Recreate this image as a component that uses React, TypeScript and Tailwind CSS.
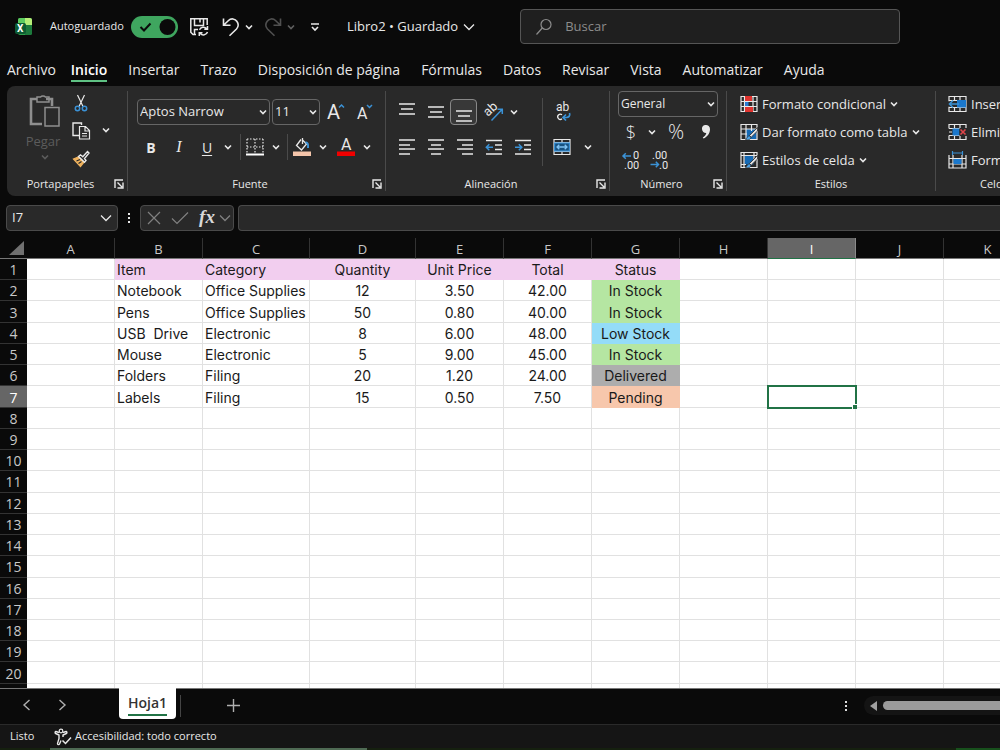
import { ReactNode, useState } from "react";
import { clsx } from "clsx";

type IconProps = { w?: number; h?: number; className?: string; children: ReactNode };

const Icon = ({ w = 18, h = 18, className, children }: IconProps) => (
  <svg
    width={w}
    height={h}
    viewBox={`0 0 ${w} ${h}`}
    fill="none"
    stroke="currentColor"
    strokeWidth={1.2}
    className={clsx("shrink-0 overflow-visible", className)}
    aria-hidden="true"
  >
    {children}
  </svg>
);

type GlyphProps = { x: number; y: number; size: number; bold?: boolean; children: string };

const Glyph = ({ x, y, size, bold, children }: GlyphProps) => (
  <text x={x} y={y} fontSize={size} fontWeight={bold ? 700 : 400} fill="currentColor" stroke="none" className="font-[Roboto,sans-serif]">
    {children}
  </text>
);

const SmallChevron = ({ className }: { className?: string }) => (
  <Icon w={8} h={6} className={className}>
    <path d="M1 1.5 4 4.5 7 1.5" strokeWidth={1.6} />
  </Icon>
);

const WideChevron = ({ className }: { className?: string }) => (
  <Icon w={12} h={8} className={className}>
    <path d="M1 1.5 6 6.5 11 1.5" strokeWidth={1.3} />
  </Icon>
);

const ExcelLogo = () => (
  <Icon w={18} h={18}>
    <g stroke="none">
      <rect x="3" y="0" width="14" height="17" rx="2" fill="#2f9e4b" />
      <path d="M5 0h5v7H3V2a2 2 0 0 1 2-2Z" fill="#5ccb5f" />
      <path d="M10 0h5a2 2 0 0 1 2 2v5h-7Z" fill="#b6ef78" />
      <path d="M10 7h7v8a2 2 0 0 1-2 2h-5Z" fill="#1c7a3c" />
      <rect x="0" y="5" width="11" height="11" rx="2" fill="#0d5c33" />
    </g>
    <g className="text-white">
      <Glyph x={2} y={14} size={10} bold>X</Glyph>
    </g>
  </Icon>
);

const SaveIcon = () => (
  <Icon w={20} h={20}>
    <g strokeWidth={1.5}>
      <path d="M7 17.5H4L1.8 15.3V1.8h16.4V8" />
      <path d="M5.5 2v6.5h9V2M11 2v3.5M5.5 17.5v-5H9" />
      <path d="M10.5 12.8a4.2 4.2 0 0 1 7-1.2M18.5 9v3.2h-3.2M18.5 15a4.2 4.2 0 0 1-7.2 1.4M10.3 19v-3.2h3.2" />
    </g>
  </Icon>
);

const UndoIcon = () => (
  <Icon w={18} h={20}>
    <path d="M1.5 1.5v6.8h7M1.8 8 6.5 3.5a5.5 5.5 0 0 1 8.5 1c1.7 2.5 1.5 5.3-.5 7.5L7.5 18.8" strokeWidth={1.6} />
  </Icon>
);

const RedoIcon = () => (
  <Icon w={18} h={20}>
    <path d="M16.5 1.5v6.8h-7M16.2 8 11.5 3.5a5.5 5.5 0 0 0-8.5 1c-1.7 2.5-1.5 5.3.5 7.5l7 6.8" strokeWidth={1.6} />
  </Icon>
);

const PasteIcon = () => (
  <Icon w={32} h={34}>
    <path d="M13 30H2V5h6M17 5h6v7" strokeWidth={2.6} />
    <path d="M8 8V3h3.5a3 2.5 0 0 1 5 0H20v5Z" strokeWidth={1.5} />
    <path d="M16 13.5h14v18.5H16Z" strokeWidth={1.5} />
  </Icon>
);

const CutIcon = () => (
  <Icon w={14} h={18}>
    <path d="M3.5 1 9 12.5M10.5 1 5 12.5" />
    <g stroke="#3b92d6" strokeWidth={1.5}>
      <circle cx="3.5" cy="14.5" r="2.2" />
      <circle cx="10.5" cy="14.5" r="2.2" />
    </g>
  </Icon>
);

const CopyIcon = () => (
  <Icon w={19} h={18}>
    <path d="M7.5 13.5H1V1h8.5v2" strokeWidth={1.4} />
    <path d="M7.5 4.5h6l4 4V17h-10ZM13 4.5V9h4.5M10 11.5h5M10 14h5" />
  </Icon>
);

const BrushIcon = () => (
  <Icon w={18} h={18}>
    <path d="M1.5 9 8.5 16.5 12 12 6.5 7Z" fill="#f0b35e" stroke="#f0b35e" />
    <path d="M4.5 11 8 9.5M6.5 13.5 9.5 11.5" stroke="#292929" />
    <path d="M6.5 6.5 8.5 4.8 10.8 6.8 15.5 1.5 17 3 12.5 8.5 14 10.5 12.5 12.2Z" strokeWidth={1.4} />
  </Icon>
);

const BordersIcon = () => (
  <Icon>
    <path d="M1 1h16M1 9h16M1 1v14M9 1v14M17 1v14" strokeDasharray="1.5 1.5" />
    <path d="M0 16.5h18" strokeWidth={2} stroke="#fff" />
  </Icon>
);

const FillIcon = () => (
  <Icon w={18} h={20}>
    <path d="M8 2.5 3.5 8.5 8.5 13 13.5 7 9.5 3V1M9.5 1v6" strokeWidth={1.3} />
    <path d="M12.5 5.5c2-.5 3 1.5 2.5 5.5" stroke="#3b92d6" strokeWidth={2} />
    <rect x="0" y="14.5" width="18" height="4.5" fill="#f4c5aa" stroke="none" />
  </Icon>
);

const FontColorIcon = () => (
  <Icon w={18} h={20}>
    <Glyph x={4} y={13} size={16}>A</Glyph>
    <rect x="0" y="14.5" width="18" height="4.5" fill="#f00000" stroke="none" />
  </Icon>
);

const GrowFontIcon = () => (
  <Icon w={20} h={20}>
    <Glyph x={0} y={17} size={20}>A</Glyph>
    <path d="M12 5.5 14.5 3 17 5.5" stroke="#3b92d6" strokeWidth={1.5} />
  </Icon>
);

const ShrinkFontIcon = () => (
  <Icon w={20} h={20}>
    <Glyph x={2} y={17} size={16}>A</Glyph>
    <path d="M12 3 14.5 5.5 17 3" stroke="#3b92d6" strokeWidth={1.5} />
  </Icon>
);

/* Horizontal strokes, given as [x1, x2, y] */
const LinesIcon = ({ lines }: { lines: number[][] }) => (
  <Icon w={16} h={18}>
    {lines.map(([x1, x2, y]) => (
      <path key={y} d={`M${x1} ${y}H${x2}`} strokeWidth={1.4} />
    ))}
  </Icon>
);

const IndentIcon = ({ right }: { right?: boolean }) => (
  <Icon w={18} h={18}>
    <path d="M1 2.5h16M10 7h7M10 11.5h7M1 16h16" strokeWidth={1.4} />
    <path
      d={right ? "M1 9.2h6.5M4.8 6.2 7.8 9.2 4.8 12.2" : "M1.5 9.2H8M4.3 6.2 1.3 9.2 4.3 12.2"}
      stroke="#3b92d6"
      strokeWidth={1.5}
    />
  </Icon>
);

const OrientationIcon = () => (
  <Icon w={20} h={20}>
    <g transform="rotate(-42 7 8)">
      <Glyph x={0} y={11} size={13}>ab</Glyph>
    </g>
    <path d="M7.5 18.5 18 7.5M13.5 7.2H18.3V12" stroke="#3b92d6" strokeWidth={1.5} />
  </Icon>
);

const WrapIcon = () => (
  <Icon w={18} h={20}>
    <Glyph x={2} y={9} size={12}>ab</Glyph>
    <path d="M8 12.8a2.6 2.6 0 1 0 0 4" strokeWidth={1.3} />
    <path d="M15.5 11c1 3-1 4.5-3 4.5H9.500M12 12.5 9 15.5l3 3" stroke="#3b92d6" strokeWidth={1.7} />
  </Icon>
);

const MergeIcon = () => (
  <Icon>
    <path d="M1 1.5h16v15H1ZM1 4.5h16M1 13.5h16M9 1.5v3M9 13.5v3" />
    <rect x="1.6" y="5" width="14.8" height="8" fill="#17517f" stroke="#3b92d6" />
    <path d="M4 9h10M6.3 6.8 4 9l2.3 2.2M11.7 6.8 14 9l-2.3 2.2" stroke="#7fc1f2" strokeWidth={1.3} />
  </Icon>
);

const DecimalIcon = ({ fewer }: { fewer?: boolean }) => (
  <Icon w={18} h={20}>
    {fewer ? (
      <>
        <Glyph x={2} y={9} size={11}>.00</Glyph>
        <Glyph x={9} y={19} size={11}>.0</Glyph>
        <path d="M.5 14.5h8M5.8 11.8l2.7 2.7-2.7 2.7" stroke="#3b92d6" strokeWidth={1.5} />
      </>
    ) : (
      <>
        <Glyph x={11} y={9} size={11}>0</Glyph>
        <Glyph x={2} y={19} size={11}>.00</Glyph>
        <path d="M1 6h8M3.8 3.3 1 6l2.8 2.7" stroke="#3b92d6" strokeWidth={1.5} />
      </>
    )}
  </Icon>
);

const CommaIcon = () => (
  <Icon w={12} h={16}>
    <path d="M5.5 1a4 4 0 0 1 4.5 4.2c0 4.3-3 7.8-6.5 9.3l-.7-1c2-1.2 3.2-2.8 3.5-4.5A4 4 0 0 1 2 5a3.8 3.8 0 0 1 3.5-4Z" fill="currentColor" stroke="none" />
  </Icon>
);

const ConditionalIcon = () => (
  <Icon>
    <path d="M1 1.5h16v15H1ZM1 6.5h16M1 11.5h16M4.5 1.5v15M13 1.5v15" />
    <rect x="5" y="1" width="7" height="5" fill="#e0342f" stroke="none" />
    <rect x="5" y="7" width="3.5" height="4" fill="#2b7cd3" stroke="none" />
    <rect x="5" y="12" width="8" height="5" fill="#e0342f" stroke="none" />
  </Icon>
);

const TableBrushIcon = ({ styles }: { styles?: boolean }) => (
  <Icon>
    {styles ? (
      <rect x="4.5" y="4.5" width="9" height="9" fill="#1569b4" stroke="none" />
    ) : (
      <rect x="6" y="6" width="10.5" height="10.5" fill="#1569b4" stroke="none" />
    )}
    <path d={styles ? "M1 1.5h16v15H1ZM4 1.5v15M14 1.5V8M1 4.5h16M1 13.5h5" : "M1 1.5h16v15H1ZM6 1.5v15M11.5 1.5V8M1 6h16M1 11h6"} />
    <path d="M17.5 4.5 9.5 12.5 11.2 14.2 17.5 8Z" fill="#e0e0e0" stroke="#292929" strokeWidth={0.8} />
    <path d="M9.2 12.8c-2 0-1.5 2.7-4 3.4 2.5 1.3 5.5.6 5.8-1.8Z" fill="#4ba3e8" stroke="#292929" strokeWidth={0.6} />
  </Icon>
);

const InsertCellsIcon = () => (
  <Icon w={19} h={18}>
    <path d="M1 1.5h17v15H1ZM1 5.5h17M1 12.5h17M6.5 1.5v4M12 1.5v4M6.5 12.5v4M12 12.5v4" />
    <rect x="9" y="5" width="9" height="7.5" fill="#1b78cc" stroke="none" />
    <path d="M0 6.2h8v5.6H0Z" fill="#292929" stroke="none" />
    <path d="M1.5 9H11M5 5.5 1.5 9 5 12.5" stroke="#3b92d6" strokeWidth={1.6} />
  </Icon>
);

const DeleteCellsIcon = () => (
  <Icon w={19} h={18}>
    <path d="M1 5.5v-4h17v4H1M1 12.5v4h17v-4H1M6.5 1.5v4M12 1.5v4M6.5 12.5v4M12 12.5v4M1 9h3" />
    <rect x="4.5" y="5.5" width="7" height="7" fill="#1b78cc" stroke="none" />
    <path d="M11.5 5h8v8h-8Z" fill="#292929" stroke="none" />
    <path d="M12.5 6.5 17.5 11.5M17.5 6.5 12.5 11.5" stroke="#e0454a" strokeWidth={1.6} />
  </Icon>
);

const FormatCellsIcon = () => (
  <Icon w={19} h={18}>
    <path d="M1 4v13h17V4M1 7.5h17M1 13h17M5 4v13M14 4v13" />
    <rect x="5.5" y="8" width="8" height="5" fill="#1b78cc" stroke="none" />
    <path d="M4.5 2h10M4.5 0v4M14.5 0v4" stroke="#3b92d6" />
  </Icon>
);

const LauncherIcon = () => (
  <Icon w={10} h={10}>
    <path d="M1 9V1h8M3.5 9H9V3.5M3.5 3.5 8 8" strokeWidth={1.4} />
  </Icon>
);

const AccessibilityIcon = () => (
  <Icon w={18} h={18}>
    <circle cx="7" cy="3" r="1.8" />
    <path d="M5 4.5 2 3.5c-1 0-1.3 1.5-.3 2L5 7v3.5L3.5 15.5c0 1.3 1.5 1.5 2 .5L7 12.5M9 4.5 12 3.5c1 0 1.3 1.5.3 2L9 7v2" strokeWidth={1.4} />
    <path d="M8.5 12.5 11.5 15.5 17 9.5" strokeWidth={1.5} />
  </Icon>
);

const Dots = () => (
  <Icon w={4} h={12}>
    <path d="M1 1h2v2H1ZM1 5h2v2H1ZM1 9h2v2H1Z" fill="currentColor" stroke="none" />
  </Icon>
);

type ButtonProps = { label: string; className?: string; children: ReactNode };

const ToolButton = ({ label, className, children }: ButtonProps) => (
  <button type="button" aria-label={label} className={clsx("flex h-[26px] shrink-0 items-center justify-center", className)}>
    {children}
  </button>
);

type DropProps = { label: string; options: string[]; className: string };

const Drop = ({ label, options, className }: DropProps) => (
  <div className={clsx("grid h-[26px] shrink-0 items-center rounded border border-[#666]", className)}>
    <select aria-label={label} className="col-start-1 row-start-1 h-full w-full appearance-none bg-transparent pl-[2px] outline-none">
      {options.map((option) => (
        <option key={option}>{option}</option>
      ))}
    </select>
    <SmallChevron className="pointer-events-none col-start-1 row-start-1 mr-[2px] justify-self-end" />
  </div>
);

type GroupProps = { title: string; launcher?: boolean; className?: string; children: ReactNode };

const Group = ({ title, launcher, className, children }: GroupProps) => (
  <section aria-label={title} className="flex shrink-0">
    <div className={clsx("flex flex-col", className)}>
      <div className="flex h-[88px]">{children}</div>
      <div className="flex h-5 items-center">
        <span className="flex-1 text-center text-[11px]">{title}</span>
        {launcher && (
          <button type="button" aria-label={`${title}: más opciones`} className="mr-[3px]">
            <LauncherIcon />
          </button>
        )}
      </div>
    </div>
    <div className="my-[5px] w-px bg-[#4a4a4a]" />
  </section>
);

const Separator = () => <div className="mx-[5px] h-[26px] w-px bg-[#4a4a4a]" />;

const TitleBar = () => {
  const [autosave, setAutosave] = useState(true);

  return (
    <header className="flex h-[53px] shrink-0 items-center pl-[15px]">
      <ExcelLogo />
      <label htmlFor="autosave" className="ml-[17px] w-[81px] text-[11px]">
        Autoguardado
      </label>
      <span className="grid h-[22px] w-[47px] shrink-0 items-center rounded-full bg-[#3fa65f]">
        <input
          id="autosave"
          type="checkbox"
          role="switch"
          checked={autosave}
          onChange={() => setAutosave(!autosave)}
          className="col-start-1 row-start-1 h-full w-full appearance-none rounded-full"
        />
        <svg width="47" height="22" viewBox="0 0 47 22" fill="none" className="pointer-events-none col-start-1 row-start-1" aria-hidden="true">
          <path d="M9.5 11 13 14.5 19.5 7.5" stroke="#0a0a0a" strokeWidth="2" />
          <circle cx="36.5" cy="11" r="8" fill="#0a0a0a" />
        </svg>
      </span>
      <ToolButton label="Guardar" className="ml-[11px]"><SaveIcon /></ToolButton>
      <ToolButton label="Deshacer" className="ml-[13px]"><UndoIcon /></ToolButton>
      <ToolButton label="Opciones de deshacer" className="ml-[5px]"><SmallChevron /></ToolButton>
      <ToolButton label="Rehacer" className="ml-[11px] text-[#505050]"><RedoIcon /></ToolButton>
      <ToolButton label="Opciones de rehacer" className="ml-[5px] text-[#606060]"><SmallChevron /></ToolButton>
      <ToolButton label="Personalizar barra" className="ml-[15px]">
        <Icon w={10} h={10}>
          <path d="M1 2h8M2 5 5 8 8 5" strokeWidth={1.6} />
        </Icon>
      </ToolButton>
      <button type="button" className="ml-[27px] flex items-center gap-[5px] text-[13px] whitespace-nowrap">
        Libro2 • Guardado
        <WideChevron />
      </button>
      <label className="mr-[100px] ml-[45px] flex h-[35px] flex-1 items-center rounded border border-[#555] bg-[#1f1f1f] pl-[14px] text-[#8c8c8c]">
        <Icon w={18} h={18}>
          <circle cx="11" cy="6.5" r="5" />
          <path d="M7.3 10 1.5 16.5" />
        </Icon>
        <input type="text" placeholder="Buscar" aria-label="Buscar" className="ml-3 min-w-0 flex-1 bg-transparent text-[13px] outline-none placeholder:text-[#8c8c8c]" />
      </label>
    </header>
  );
};

const tabs = ["Archivo", "Inicio", "Insertar", "Trazo", "Disposición de página", "Fórmulas", "Datos", "Revisar", "Vista", "Automatizar", "Ayuda"];

const Tabs = () => (
  <nav className="flex h-[33px] shrink-0 items-start gap-[21px] pl-[7px] text-[14px] whitespace-nowrap">
    {tabs.map((tab) => (
      <button
        key={tab}
        type="button"
        className={clsx(
          "h-[29px] border-b-2 pt-[7px] leading-5",
          tab === "Inicio" ? "-ml-[6px] border-[#5fc284] font-semibold text-white" : "border-transparent"
        )}
      >
        {tab}
      </button>
    ))}
  </nav>
);

const ClipboardGroup = () => (
  <Group title="Portapapeles" launcher className="w-[120px]">
    <button type="button" className="ml-[15px] flex w-[42px] flex-col items-center pt-[8px] pl-[4px] text-[#5c5c5c]">
      <span className="text-[#8e8e8e]"><PasteIcon /></span>
      <span className="pr-[4px] text-[13px] leading-[26px]">Pegar</span>
      <SmallChevron />
    </button>
    <div className="ml-[6px] grid w-[22px] grid-rows-3 pt-[4px]">
      <ToolButton label="Cortar"><CutIcon /></ToolButton>
      <ToolButton label="Copiar"><CopyIcon /></ToolButton>
      <ToolButton label="Copiar formato"><BrushIcon /></ToolButton>
    </div>
    <ToolButton label="Opciones de copiar" className="ml-[10px] self-center"><SmallChevron /></ToolButton>
  </Group>
);

const FontGroup = () => (
  <Group title="Fuente" launcher className="w-[257px]">
    <div className="flex flex-col gap-[9px] pt-[13px] pl-[9px]">
      <div className="flex">
        <Drop label="Fuente" options={["Aptos Narrow"]} className="w-[133px]" />
        <Drop label="Tamaño de fuente" options={["11"]} className="ml-[2px] w-[48px]" />
        <ToolButton label="Aumentar tamaño" className="ml-[6px] w-[22px]"><GrowFontIcon /></ToolButton>
        <ToolButton label="Reducir tamaño" className="ml-[6px] w-[22px]"><ShrinkFontIcon /></ToolButton>
      </div>
      <div className="flex items-center">
        <ToolButton label="Negrita" className="w-7 text-[14px] font-bold">B</ToolButton>
        <ToolButton label="Cursiva" className="w-7 font-['Liberation_Serif',serif] text-[16px] italic">I</ToolButton>
        <ToolButton label="Subrayado" className="w-7 text-[14px] underline underline-offset-2">U</ToolButton>
        <ToolButton label="Opciones de subrayado" className="w-[14px]"><SmallChevron /></ToolButton>
        <Separator />
        <ToolButton label="Bordes"><BordersIcon /></ToolButton>
        <ToolButton label="Opciones de bordes" className="ml-[6px] w-[12px]"><SmallChevron /></ToolButton>
        <Separator />
        <ToolButton label="Color de relleno"><FillIcon /></ToolButton>
        <ToolButton label="Opciones de relleno" className="ml-[6px] w-[12px]"><SmallChevron /></ToolButton>
        <ToolButton label="Color de fuente" className="ml-[8px]"><FontColorIcon /></ToolButton>
        <ToolButton label="Opciones de color" className="ml-[6px] w-[12px]"><SmallChevron /></ToolButton>
      </div>
    </div>
  </Group>
);

const AlignmentGroup = () => (
  <Group title="Alineación" launcher className="w-[223px]">
    <div className="grid grid-cols-5 content-start gap-y-[9px] pt-[13px] pl-[6px]">
      <ToolButton label="Alinear arriba" className="w-[29px]"><LinesIcon lines={[[0, 16, 1], [2, 14, 6], [0, 16, 11]]} /></ToolButton>
      <ToolButton label="Alinear en medio" className="w-[29px]"><LinesIcon lines={[[0, 16, 4], [2, 14, 9], [0, 16, 14]]} /></ToolButton>
      <ToolButton label="Alinear abajo" className="w-[27px] rounded border border-[#888] bg-[#383838]"><LinesIcon lines={[[0, 16, 8], [2, 14, 13], [0, 16, 18]]} /></ToolButton>
      <ToolButton label="Orientación" className="w-[29px]"><OrientationIcon /></ToolButton>
      <ToolButton label="Opciones de orientación" className="w-[12px]"><SmallChevron /></ToolButton>
      <ToolButton label="Alinear a la izquierda" className="w-[29px]"><LinesIcon lines={[[0, 16, 2], [0, 11, 7], [0, 16, 11], [0, 11, 16]]} /></ToolButton>
      <ToolButton label="Centrar" className="w-[29px]"><LinesIcon lines={[[0, 16, 2], [3, 13, 7], [0, 16, 11], [3, 13, 16]]} /></ToolButton>
      <ToolButton label="Alinear a la derecha" className="w-[29px]"><LinesIcon lines={[[0, 16, 2], [5, 16, 7], [0, 16, 11], [5, 16, 16]]} /></ToolButton>
      <ToolButton label="Disminuir sangría" className="w-[29px]"><IndentIcon /></ToolButton>
      <ToolButton label="Aumentar sangría" className="w-[29px]"><IndentIcon right /></ToolButton>
    </div>
    <div className="mt-[12px] ml-[5px] h-[68px] w-px bg-[#4a4a4a]" />
    <div className="flex flex-col gap-[9px] pt-[13px] pl-[10px]">
      <ToolButton label="Ajustar texto" className="w-[20px]"><WrapIcon /></ToolButton>
      <div className="flex items-center">
        <ToolButton label="Combinar y centrar" className="w-[18px]"><MergeIcon /></ToolButton>
        <ToolButton label="Opciones de combinar" className="ml-[10px] w-[14px]"><SmallChevron /></ToolButton>
      </div>
    </div>
  </Group>
);

const NumberGroup = () => (
  <Group title="Número" launcher className="w-[116px]">
    <div className="grid grid-rows-[28px_28px_28px] items-center pt-[4px] pl-[8px]">
      <Drop label="Formato de número" options={["General"]} className="w-[100px] text-[12px]" />
      <div className="flex items-center">
        <ToolButton label="Moneda" className="w-[26px] text-[18px] font-light">$</ToolButton>
        <ToolButton label="Opciones de moneda" className="w-[16px]"><SmallChevron /></ToolButton>
        <ToolButton label="Porcentaje" className="w-[32px] text-[20px] font-light">%</ToolButton>
        <ToolButton label="Separador de miles" className="w-[28px]"><CommaIcon /></ToolButton>
      </div>
      <div className="flex items-center gap-[10px] pl-[4px]">
        <ToolButton label="Más decimales"><DecimalIcon /></ToolButton>
        <ToolButton label="Menos decimales"><DecimalIcon fewer /></ToolButton>
      </div>
    </div>
  </Group>
);

const MenuRow = ({ icon, text, drop }: { icon: ReactNode; text: string; drop?: boolean }) => (
  <button type="button" className="flex items-center gap-[4px] text-[13px] leading-5 whitespace-nowrap">
    {icon}
    {text}
    {drop && <SmallChevron />}
  </button>
);

const Ribbon = () => (
  <div className="ml-[7px] flex h-[110px] shrink-0 overflow-hidden rounded-l-lg bg-[#292929] text-[13px]">
    <ClipboardGroup />
    <FontGroup />
    <AlignmentGroup />
    <NumberGroup />
    <Group title="Estilos" className="w-[208px]">
      <div className="grid grid-rows-[28px_28px_28px] items-center justify-items-start pt-[4px] pl-[13px]">
        <MenuRow icon={<ConditionalIcon />} text="Formato condicional" drop />
        <MenuRow icon={<TableBrushIcon />} text="Dar formato como tabla" drop />
        <MenuRow icon={<TableBrushIcon styles />} text="Estilos de celda" drop />
      </div>
    </Group>
    <Group title="Celdas" className="w-[122px]">
      <div className="grid grid-rows-[28px_28px_28px] items-center justify-items-start pt-[4px] pl-[12px]">
        <MenuRow icon={<InsertCellsIcon />} text="Insertar" />
        <MenuRow icon={<DeleteCellsIcon />} text="Eliminar" />
        <MenuRow icon={<FormatCellsIcon />} text="Formato" />
      </div>
    </Group>
  </div>
);

const FormulaBar = () => (
  <div className="flex h-[42px] shrink-0 items-center pt-[1px] pl-[6px]">
    <div className="flex h-[26px] w-[112px] items-center rounded border border-[#4a4a4a] bg-[#292929] pr-[5px] pl-[5px]">
      <input type="text" aria-label="Cuadro de nombres" defaultValue="I7" className="min-w-0 flex-1 bg-transparent text-[13px] outline-none" />
      <button type="button" aria-label="Abrir lista de nombres"><WideChevron /></button>
    </div>
    <span className="mx-[9px]"><Dots /></span>
    <div className="flex h-[26px] w-[94px] items-center rounded border border-[#4a4a4a] bg-[#292929] pl-[6px] text-[#808080]">
      <ToolButton label="Cancelar">
        <Icon w={14} h={14}><path d="M1 1 13 13M13 1 1 13" /></Icon>
      </ToolButton>
      <ToolButton label="Introducir" className="ml-[10px]">
        <Icon w={18} h={14}><path d="M1 7.5 6 12.5 17 1.5" /></Icon>
      </ToolButton>
      <ToolButton label="Insertar función" className="ml-[9px] w-[18px] font-['Liberation_Serif',serif] text-[19px] font-bold text-[#d8d8d8] italic">fx</ToolButton>
      <ToolButton label="Opciones de función" className="ml-[3px]"><WideChevron /></ToolButton>
    </div>
    <input type="text" aria-label="Barra de fórmulas" className="ml-[4px] h-[26px] min-w-0 flex-1 rounded-l border border-r-0 border-[#4a4a4a] bg-[#292929] outline-none" />
  </div>
);

const columns = ["A", "B", "C", "D", "E", "F", "G", "H", "I", "J", "K"];

const columnWidths: Record<string, string> = { C: "w-[107px]", D: "w-[106px]" };

const rows = [
  ["Item", "Category", "Quantity", "Unit Price", "Total", "Status"],
  ["Notebook", "Office Supplies", "12", "3.50", "42.00", "In Stock"],
  ["Pens", "Office Supplies", "50", "0.80", "40.00", "In Stock"],
  ["USB  Drive", "Electronic", "8", "6.00", "48.00", "Low Stock"],
  ["Mouse", "Electronic", "5", "9.00", "45.00", "In Stock"],
  ["Folders", "Filing", "20", "1.20", "24.00", "Delivered"],
  ["Labels", "Filing", "15", "0.50", "7.50", "Pending"],
];

const statusColors: Record<string, string> = {
  "In Stock": "bg-[#b5e6a2] border-[#b5e6a2]",
  "Low Stock": "bg-[#94dcf8] border-[#94dcf8]",
  Delivered: "bg-[#adadad] border-[#adadad]",
  Pending: "bg-[#f7c7ac] border-[#f7c7ac]",
};

const cellColor = (row: number, text: string) => {
  if (row === 0 && text) return "bg-[#f2ceef] border-[#f2ceef]";
  return statusColors[text] ?? "border-[#e1e1e1]";
};

const Sheet = () => (
  <main className="min-h-0 flex-1 overflow-hidden bg-white">
    <table className="h-[467px] w-[1031px] table-fixed border-separate border-spacing-0">
      <colgroup>
        <col className="w-[27px]" />
        {columns.map((column) => (
          <col key={column} className={columnWidths[column] ?? "w-[88px]"} />
        ))}
      </colgroup>
      <thead>
        <tr className="h-[21px] bg-[#0a0a0a] text-[13px] leading-[18px] text-[#c8c8c8]">
          <th className="border-b border-[#777] p-0">
            <svg width="16" height="16" viewBox="0 0 16 16" className="mr-[2px] ml-auto" aria-hidden="true">
              <path d="M15 1v14H0Z" fill="#707070" />
            </svg>
          </th>
          {columns.map((column) => (
            <th
              key={column}
              scope="col"
              className={clsx(
                "border-r border-b px-0 pt-[2px] pb-0 font-normal",
                column === "I" ? "border-r-[#8a8a8a] border-b-[#217346] bg-[#666] text-white" : "border-r-[#333] border-b-[#777]"
              )}
            >
              {column}
            </th>
          ))}
        </tr>
      </thead>
      <tbody>
        {Array.from({ length: 21 }, (_, r) => (
          <tr key={r}>
            <th
              scope="row"
              className={clsx(
                "border-b border-[#333] px-0 pt-[2px] pb-0 text-[14px] leading-[18px] font-normal",
                r === 6 ? "bg-[#666] text-white" : "bg-[#0a0a0a] text-[#c8c8c8]"
              )}
            >
              {r < 20 ? r + 1 : "\u00a0"}
            </th>
            {columns.map((column, c) => {
              const text = rows[r]?.[c - 1] ?? "";
              const selected = column === "I" && r === 6;
              return (
                <td
                  key={column}
                  className={clsx(
                    "border-r border-b px-[2px] pt-[2px] pb-0 font-[Inter,Roboto,sans-serif] text-[14px] leading-[18px] whitespace-pre text-[#1a1a1a]",
                    c > 2 && "text-center",
                    cellColor(r, text),
                    selected && "relative outline-2 -outline-offset-1 outline-[#217346]"
                  )}
                >
                  {text}
                  {selected && <span className="absolute -right-[2px] -bottom-[2px] size-[5px] border-t border-l border-white bg-[#217346]" />}
                </td>
              );
            })}
          </tr>
        ))}
      </tbody>
    </table>
  </main>
);

const SheetTabs = () => (
  <div className="flex h-[36px] shrink-0 items-start border-t border-[#777] text-[#b0b0b0]">
    <button type="button" aria-label="Hoja anterior" className="mt-[10px] ml-[22px]">
      <Icon w={9} h={12}><path d="M7.5 1 2 6 7.5 11" strokeWidth={1.4} /></Icon>
    </button>
    <button type="button" aria-label="Hoja siguiente" className="mt-[10px] ml-[27px]">
      <Icon w={9} h={12}><path d="M1.5 1 7 6 1.5 11" strokeWidth={1.4} /></Icon>
    </button>
    <button type="button" className="-mt-px ml-[52px] h-[31px] rounded-b bg-white px-[9px] text-[14px] font-semibold text-[#333]">
      <span className="block border-b-2 border-[#217346] leading-[22px]">Hoja1</span>
    </button>
    <div className="mt-[6px] ml-[4px] h-[22px] w-px bg-[#444]" />
    <button type="button" aria-label="Hoja nueva" className="mt-[10px] ml-[46px]">
      <Icon w={13} h={13}><path d="M6.5 0v13M0 6.5h13" strokeWidth={1.4} /></Icon>
    </button>
    <span className="mt-[11px] mr-[16px] ml-auto text-[#ddd]"><Dots /></span>
    <div className="mt-[7px] flex h-[19px] w-[136px] items-center gap-[5px] rounded-l-full bg-[#141414] pl-[5px]">
      <button type="button" aria-label="Desplazar a la izquierda">
        <Icon w={9} h={12}><path d="M8 1v10L1 6Z" fill="#a0a0a0" stroke="none" /></Icon>
      </button>
      <div className="h-[9px] flex-1 rounded-l-full bg-[#9b9b9b]" />
    </div>
  </div>
);

const StatusBar = () => (
  <footer className="flex h-[26px] shrink-0 flex-col border-t border-[#2a2a2a] bg-[#151515] text-[11px]">
    <div className="flex flex-1 items-center pl-[10px]">
      <span className="w-[44px]">Listo</span>
      <button type="button" className="flex items-center gap-[3px]">
        <AccessibilityIcon />
        Accesibilidad: todo correcto
      </button>
    </div>
    <div className="flex h-[2px] justify-between bg-[#15200f] pl-[50px]">
      <div className="w-[317px] bg-[#4f6b54]" />
      <div className="w-[44px] bg-[#17501c]" />
    </div>
  </footer>
);

const App = () => (
  <div className="flex h-screen flex-col overflow-hidden bg-[#0a0a0a] font-['Open_Sans','Noto_Sans',sans-serif] text-[#e8e8e8]">
    <TitleBar />
    <Tabs />
    <Ribbon />
    <FormulaBar />
    <Sheet />
    <SheetTabs />
    <StatusBar />
  </div>
);

export default App;
